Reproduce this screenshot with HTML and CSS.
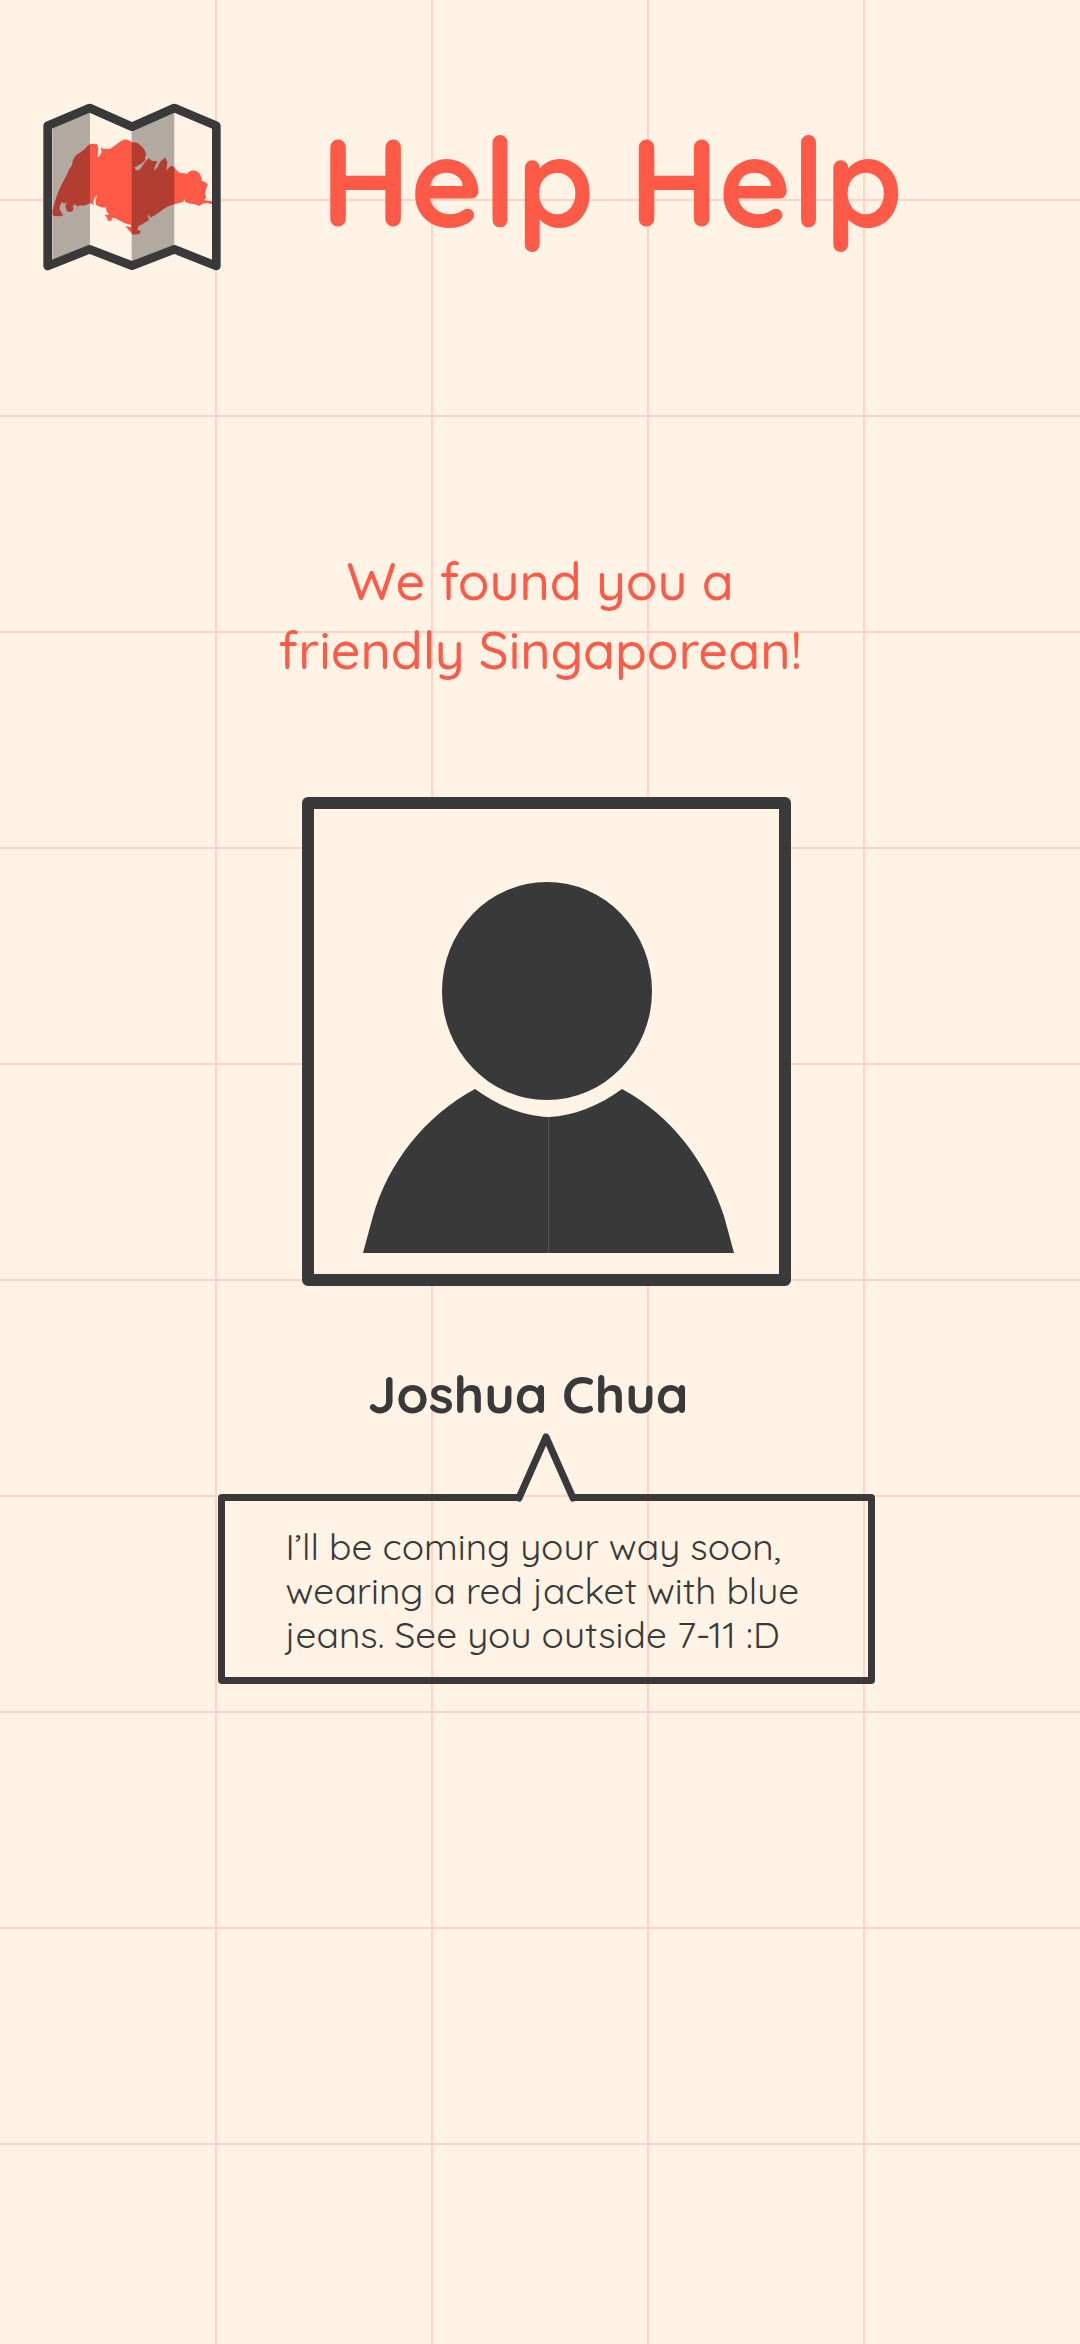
FILE: index.html
```html
<!DOCTYPE html>
<html lang="en">
<head>
<meta charset="utf-8">
<meta name="viewport" content="width=device-width, initial-scale=1">
<title>Help Help</title>
<link rel="stylesheet" href="styles.css">
</head>
<body>
<header class="header">
  <svg class="logo" viewBox="38 38 534 504" role="img" aria-label="Folded map of Singapore">
    <path class="logo-paper" d="M52 106 178 53 305 109 432 53 558 106V527L432 477 305 526 178 477 52 527Z"/>
    <path class="logo-land" d="M66 364C72 335 82 305 95 280C105 262 113 246 117 235L124 227C127 205 134 194 148 187L163 177C171 166 177 160 186 160L199 161C205 168 205 181 201 201C207 199 212 193 214 183L210 171L218 175L239 175C252 169 263 156 278 149C287 146 296 148 304 156C316 154 327 159 333 168C343 176 345 186 348 194L344 199L345 209C338 218 328 224 317 229L305 232L313 230L316 240C327 241 334 232 338 223C344 214 350 207 356 204L364 211L381 213C378 222 372 229 371 240C379 237 385 224 389 215L405 201L411 215L408 240C415 232 420 226 427 227C435 234 441 243 448 247L471 250C477 240 491 238 501 244C511 250 514 260 514 272C522 274 530 277 532 284L527 298C524 304 524 315 528 321L522 330L544 332L546 342L532 338L516 340L508 347L490 341C480 342 472 337 464 335L462 325L459 335L432 342C410 346 392 363 375 374L359 382L355 370L352 380L357 385C352 396 345 392 337 402L325 406L321 418L331 422L327 431L308 433L297 422L285 407L302 410L302 403C287 403 271 393 256 384L244 383L245 390L234 393L229 381L222 373L236 374L229 363L226 350C218 355 210 348 200 346C194 342 195 326 201 315C192 321 187 333 190 344L179 338C167 345 157 347 148 345L142 349L134 342L127 348C132 356 128 366 117 365C107 364 107 353 105 346L110 335L102 340L93 335L92 342C83 350 90 365 99 374L92 378L71 377C67 374 66 370 66 364Z"/>
    <path class="logo-fold" d="M66 100 179 53V477L66 507ZM304 109 432 53V477L304 526Z"/>
    <path class="logo-frame" d="M52 106 178 53 305 109 432 53 558 106V527L432 477 305 526 178 477 52 527Z"/>
  </svg>
  <h1 class="title">Help Help</h1>
</header>
<main class="main">
  <p class="found">We found you a<br>friendly Singaporean!</p>
  <svg class="avatar" viewBox="0 0 489 489" role="img" aria-label="Profile picture">
    <rect class="avatar-frame" x="6" y="6" width="477" height="477"/>
    <ellipse cx="245" cy="194" rx="105" ry="109"/>
    <path d="M61 456 71 419C86 366 123 319 173 292C196 309 222 319 246 320V456Z"/>
    <path d="M432 456 422 419C405 366 370 319 320 292C297 309 271 319 247 320V456Z"/>
    <path class="avatar-seam" d="M246.5 320V456"/>
  </svg>
  <h2 class="name">Joshua Chua</h2>
  <div class="bubble">
    <svg class="bubble-tail" viewBox="0 0 60 68" aria-hidden="true">
      <path class="tail-gap" d="M4 59H56V69H4Z"/>
      <path class="tail-grid" d="M4 61H56V63H4Z"/>
      <path class="tail-line" d="M3 64 30 3 57 64"/>
    </svg>
    <p class="message">I’ll be coming your way soon,<br>wearing a red jacket with blue<br>jeans. See you outside 7-11 :D</p>
  </div>
</main>
</body>
</html>
```
FILE: styles.css
```css
:root {
  --cream: #fff3e5;
  --grid: #ffd4c4;
  --coral: #ff5a47;
  --ink: #393939;
}
* { box-sizing: border-box; margin: 0; }
body {
  min-height: 100vh;
  background-color: var(--cream);
  /* The cream strips keep vertical grid lines off the page edges. */
  background-image:
    linear-gradient(var(--grid) 2px, transparent 2px),
    linear-gradient(var(--cream), var(--cream)),
    linear-gradient(var(--cream), var(--cream)),
    linear-gradient(90deg, var(--grid) 2px, transparent 2px);
  background-size: 216px 216px, 1px 100%, 1px 100%, 216px 216px;
  background-position: -1px -17px, left top, right top, -1px -17px;
  background-repeat: repeat, no-repeat, no-repeat, repeat;
  color: var(--ink);
  font-family: Quicksand, Lato, sans-serif;
}
.header {
  display: flex;
  align-items: flex-start;
  gap: 100px;
  padding: 103px 43px 0;
}
.logo { flex: none; width: 178px; height: 168px; }
.logo-paper { fill: var(--cream); }
.logo-land { fill: var(--coral); }
.logo-fold { fill: #000; opacity: .3; }
.logo-frame { fill: none; stroke: var(--ink); stroke-width: 26; stroke-linejoin: round; }
.title { color: var(--coral); font-size: 124px; line-height: 155px; font-weight: 700; white-space: nowrap; }
.main {
  display: flex;
  flex-direction: column;
  align-items: center;
  padding: 275px 24px 80px;
}
.found { color: var(--coral); font-size: 52px; line-height: 69px; font-weight: 500; text-align: center; }
.avatar { width: 489px; height: 489px; margin: 113px 0 0 13px; fill: var(--ink); }
.avatar-frame { fill: var(--cream); stroke: var(--ink); stroke-width: 12; stroke-linejoin: round; }
.avatar-seam { stroke: #555; stroke-width: 1; }
.name { margin-top: 75px; margin-right: 24px; font-size: 52px; line-height: 65px; font-weight: 700; }
.bubble {
  position: relative;
  width: 657px;
  max-width: 100%;
  margin: 68px 0 0 12px;
  padding: 23px 61px 21px;
  border: 7px solid var(--ink);
  border-radius: 4px;
}
.bubble-tail { position: absolute; left: 50%; bottom: 100%; width: 60px; height: 68px; margin-left: -30px; margin-bottom: -1px; overflow: visible; }
.tail-gap { fill: var(--cream); }
.tail-grid { fill: var(--grid); }
.tail-line { fill: none; stroke: var(--ink); stroke-width: 7; stroke-linecap: round; stroke-linejoin: round; }
.message { font-size: 37px; line-height: 44px; font-weight: 400; }
```
